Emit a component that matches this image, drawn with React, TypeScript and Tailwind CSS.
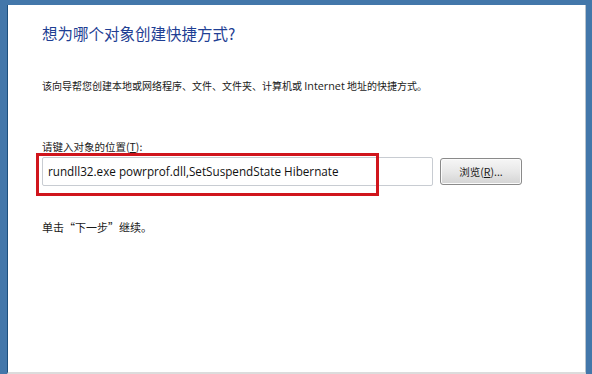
import React from 'react';

const cjk = { fontFamily: '"Noto Sans CJK SC", "Noto Sans", sans-serif' };
const latin = { fontFamily: '"Open Sans", "Noto Sans CJK SC", sans-serif' };

export default function App() {
  return (
    <div className="w-[592px] h-[374px] overflow-hidden bg-[#4377aa] pt-[5px] pl-[7px] pr-[6px]" style={cjk}>
      <div className="h-[369px] bg-white border-l border-l-[#1d4f7c] border-r border-r-[#b9c3cc] border-b-[2px] border-b-[#dcdcdc] flex flex-col pl-[34px]">
        <h1 className="mt-[18px] text-[15.5px] leading-[20px] text-[#1f3f94] font-normal">想为哪个对象创建快捷方式?</h1>

        <p className="mt-[35px] text-[10px] leading-[16px] text-[#1a1a1a]">
          该向导帮您创建本地或网络程序、文件、文件夹、计算机或 <span className="text-[10.8px]" style={latin}>Internet</span> 地址的快捷方式。
        </p>

        <label className="mt-[45px] text-[10.5px] leading-[16px] text-[#1a1a1a]">
          请键入对象的位置(<span className="underline">T</span>):
        </label>

        <div className="mt-[2px] flex items-center">
          <div className="relative">
            <div className="w-[391px] h-[29px] border border-[#c8ccd2] rounded-[2px] flex items-center pl-[5px] text-[11.7px] text-[#111]" style={latin}>
              rundll32.exe powrprof.dll,SetSuspendState Hibernate
            </div>
            <div className="absolute left-[-6px] top-[-4px] w-[343px] h-[43px] border-[3px] border-[#d0151c]" />
          </div>
          <button className="ml-[7px] w-[82px] h-[27px] rounded-[3px] border border-[#8a8a8a] bg-gradient-to-b from-[#f6f6f6] via-[#e8e8e8] to-[#d4d4d4] text-[10.5px] text-[#1a1a1a] shadow-[inset_0_0_0_1px_#fbfbfb]">
            浏览(<span className="underline">R</span>)...
          </button>
        </div>

        <p className="mt-[33px] text-[11px] leading-[16px] text-[#1a1a1a]">单击“下一步”继续。</p>
      </div>
    </div>
  );
}
